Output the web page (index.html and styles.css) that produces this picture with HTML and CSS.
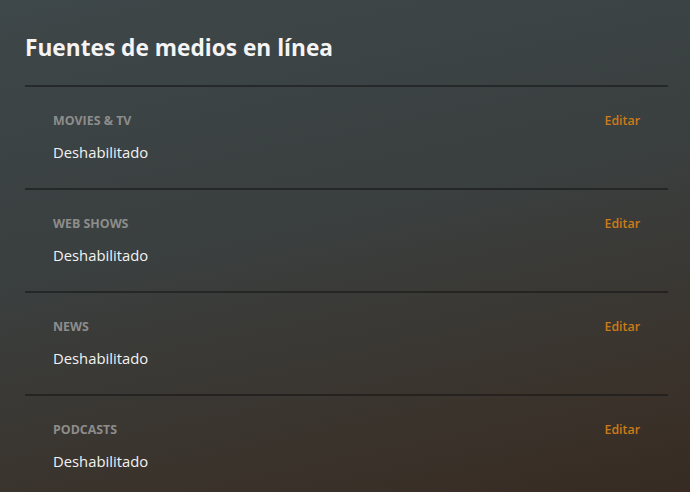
FILE: index.html
```html
<!DOCTYPE html>
<html lang="es">
<head>
  <meta charset="UTF-8" />
  <meta name="viewport" content="width=device-width, initial-scale=1.0" />
  <title>Fuentes de medios en línea</title>
  <link rel="stylesheet" href="styles.css">
</head>
<body>
  <main class="page">
    <h1>Fuentes de medios en línea</h1>

    <section class="source">
      <div class="source-head">
        <span class="source-name">Movies &amp; TV</span>
        <a href="#" class="edit-link">Editar</a>
      </div>
      <p class="source-status">Deshabilitado</p>
    </section>

    <section class="source">
      <div class="source-head">
        <span class="source-name">Web Shows</span>
        <a href="#" class="edit-link">Editar</a>
      </div>
      <p class="source-status">Deshabilitado</p>
    </section>

    <section class="source">
      <div class="source-head">
        <span class="source-name">News</span>
        <a href="#" class="edit-link">Editar</a>
      </div>
      <p class="source-status">Deshabilitado</p>
    </section>

    <section class="source">
      <div class="source-head">
        <span class="source-name">Podcasts</span>
        <a href="#" class="edit-link">Editar</a>
      </div>
      <p class="source-status">Deshabilitado</p>
    </section>
  </main>
</body>
</html>
```

FILE: styles.css
```css
html, body {
  height: 100%;
}

body {
  margin: 0;
  font-family: 'Open Sans', 'Noto Sans', sans-serif;
  color: #fff;
  background: linear-gradient(168deg, #3e4749 0%, #3a3f3f 45%, #3a332c 80%, #372b23 100%);
  overflow: hidden;
}

.page {
  padding: 33px 22px 0 25px;
}

h1 {
  margin: 0 0 22px;
  font-size: 22.7px;
  line-height: 30px;
  font-weight: 700;
  color: #f4f4f4;
}

.source {
  border-top: 2px solid rgba(20, 20, 20, 0.55);
  padding: 24px 28px 26px;
}

.source-head {
  display: flex;
  justify-content: space-between;
  align-items: center;
  height: 18px;
}

.source-name {
  font-size: 12.4px;
  font-weight: 700;
  text-transform: uppercase;
  color: #8d8d8b;
}

.edit-link {
  font-size: 12.4px;
  font-weight: 600;
  color: #cc7b19;
  text-decoration: none;
}

.source-status {
  margin: 13px 0 0;
  font-size: 14.8px;
  line-height: 20px;
  color: #f2f2f2;
}
```
